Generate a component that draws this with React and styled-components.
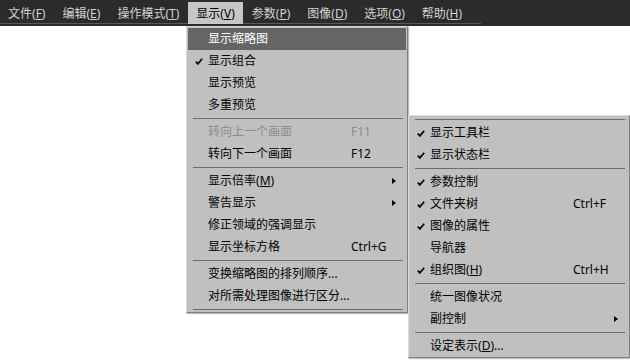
import React from "react";
import styled, { createGlobalStyle } from "styled-components";

const GlobalStyle = createGlobalStyle`
    html, body {
        margin: 0;
        padding: 0;
        background: #ffffff;
    }
    body {
        font-family: "Noto Sans", "Noto Sans CJK SC", sans-serif;
        font-size: 12px;
    }
`;

const barItems = [
    { label: "文件", key: "F" },
    { label: "编辑", key: "E" },
    { label: "操作模式", key: "T" },
    { label: "显示", key: "V", open: true },
    { label: "参数", key: "P" },
    { label: "图像", key: "D" },
    { label: "选项", key: "O" },
    { label: "帮助", key: "H" },
];

const viewMenu = [
    { label: "显示缩略图", active: true },
    { label: "显示组合", checked: true },
    { label: "显示预览" },
    { label: "多重预览" },
    "sep",
    { label: "转向上一个画面", shortcut: "F11", disabled: true },
    { label: "转向下一个画面", shortcut: "F12" },
    "sep",
    { label: "显示倍率", key: "M", submenu: true },
    { label: "警告显示", submenu: true },
    { label: "修正领域的强调显示" },
    { label: "显示坐标方格", shortcut: "Ctrl+G" },
    "sep",
    { label: "变换缩略图的排列顺序..." },
    { label: "对所需处理图像进行区分..." },
    "sep",
];

const windowMenu = [
    "sep",
    { label: "显示工具栏", checked: true },
    { label: "显示状态栏", checked: true },
    "sep",
    { label: "参数控制", checked: true },
    { label: "文件夹树", checked: true, shortcut: "Ctrl+F" },
    { label: "图像的属性", checked: true },
    { label: "导航器" },
    { label: "组织图", key: "H", checked: true, shortcut: "Ctrl+H" },
    "sep",
    { label: "统一图像状况" },
    { label: "副控制", submenu: true },
    "sep",
    { label: "设定表示", key: "D", suffix: "..." },
];

const CheckIcon = () => (
    <svg width="8" height="7" viewBox="0 0 8 7">
        <path d="M0.8 3.6 L2.9 5.9 L7.2 0.8" fill="none" stroke="#000" strokeWidth="1.7" />
    </svg>
);

const Label = ({ item }) => (
    <>
        {item.label}
        {item.key && (
            <>
                (<u>{item.key}</u>)
            </>
        )}
        {item.suffix}
    </>
);

const DropMenu = ({ items, x, y }) => (
    <Menu $x={x} $y={y}>
        {items.map((item, i) =>
            item === "sep" ? (
                <Separator key={i} />
            ) : (
                <Item key={i} $active={item.active} $disabled={item.disabled}>
                    <CheckCell>{item.checked && <CheckIcon />}</CheckCell>
                    <span>
                        <Label item={item} />
                    </span>
                    <span>{item.shortcut}</span>
                    <span>{item.submenu && <Arrow />}</span>
                </Item>
            )
        )}
    </Menu>
);

const App = () => {
    return (
        <Screen>
            <GlobalStyle />
            <MenuBar>
                <BarRow>
                    {barItems.map((b) => (
                        <BarItem key={b.key} $open={b.open}>
                            <Label item={b} />
                        </BarItem>
                    ))}
                </BarRow>
            </MenuBar>
            <DropMenu items={viewMenu} x={186} y={26} />
            <DropMenu items={windowMenu} x={408} y={115} />
        </Screen>
    );
};

const Screen = styled.div`
    position: relative;
    width: 630px;
    height: 360px;
    overflow: hidden;
    background: #ffffff;
`;

const MenuBar = styled.div`
    height: 26px;
    background: #2b2b2b;
`;

const BarRow = styled.div`
    display: flex;
    width: 481px;
    height: 24px;
    border-bottom: 1px solid #5a5a5a;
    box-sizing: border-box;
`;

const BarItem = styled.div`
    display: flex;
    align-items: center;
    height: 22px;
    margin-top: 2px;
    padding: 0 8.5px 0 8px;
    white-space: nowrap;
    color: ${(p) => (p.$open ? "#000000" : "#d4d4d4")};
    background: ${(p) => (p.$open ? "#c6c6c6" : "transparent")};

    & + & {
        padding-left: 8.5px;
    }

    u {
        text-underline-offset: 1px;
    }
`;

const Menu = styled.div`
    position: absolute;
    left: ${(p) => p.$x}px;
    top: ${(p) => p.$y}px;
    width: 222px;
    box-sizing: border-box;
    padding: 1px 1px 0;
    background: #c0c0c0;
    border: 1px solid;
    border-color: #d8d8d8 #7e7e7e #7e7e7e #d8d8d8;
    box-shadow: 1px 1px 1px rgba(0, 0, 0, 0.25);
`;

const Item = styled.div`
    display: grid;
    grid-template-columns: 20px 143px 41px 14px;
    align-items: center;
    height: 22px;
    line-height: 22px;
    white-space: nowrap;
    color: ${(p) => (p.$active ? "#ffffff" : p.$disabled ? "#8c8c8c" : "#000000")};
    background: ${(p) => (p.$active ? "#656565" : "transparent")};
`;

const CheckCell = styled.span`
    display: flex;
    align-items: center;
    padding-left: 7px;
`;

const Arrow = styled.i`
    display: block;
    width: 0;
    height: 0;
    border-left: 4px solid #000000;
    border-top: 3.5px solid transparent;
    border-bottom: 3.5px solid transparent;
`;

const Separator = styled.div`
    height: 0;
    margin: 2px 3px 2px 5px;
    border-top: 1px solid #6c6c6c;
`;

export default App;
